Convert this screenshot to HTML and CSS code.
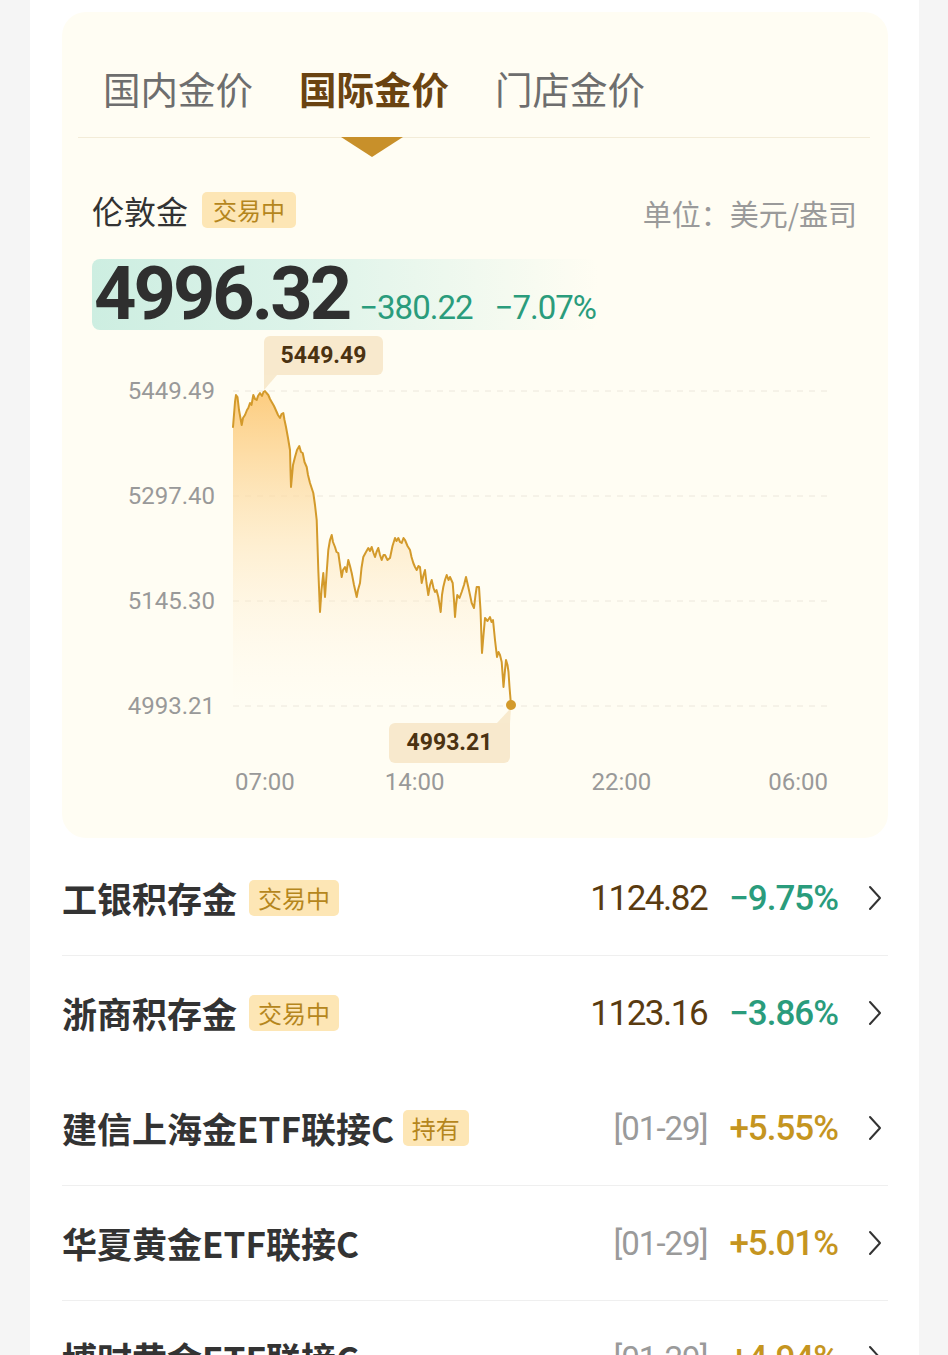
FILE: index.html
```html
<!DOCTYPE html>
<html lang="zh-CN">
<head>
<meta charset="utf-8">
<title>国际金价</title>
<link rel="stylesheet" href="styles.css">
</head>
<body>
<div class="page">
  <section class="gold-card">
    <nav class="tabs">
      <span class="tab">国内金价</span>
      <span class="tab active">国际金价</span>
      <span class="tab">门店金价</span>
    </nav>

    <div class="quote-head">
      <div class="quote-name">伦敦金<span class="badge badge-lg">交易中</span></div>
      <div class="unit">单位：美元/盎司</div>
    </div>

    <div class="price-box">
      <span class="price">4996.32</span>
      <span class="chg">−380.22</span>
      <span class="chg chg-pct">−7.07%</span>
    </div>

    <div class="chart">
      <div class="y-axis">
        <span>5449.49</span>
        <span>5297.40</span>
        <span>5145.30</span>
        <span>4993.21</span>
      </div>
      <div class="plot">
        <svg class="plot-svg" width="597" height="343" viewBox="233 377 597 343">
          <defs>
            <linearGradient id="fillGrad" gradientUnits="userSpaceOnUse" x1="0" y1="391" x2="0" y2="706">
              <stop offset="0" stop-color="#fcc772" stop-opacity="0.9"/>
              <stop offset="0.45" stop-color="#fde2b2" stop-opacity="0.6"/>
              <stop offset="1" stop-color="#fff6e6" stop-opacity="0"/>
            </linearGradient>
          </defs>
          <g class="grid">
            <line x1="233" y1="391" x2="831" y2="391"/>
            <line x1="233" y1="496" x2="831" y2="496"/>
            <line x1="233" y1="601" x2="831" y2="601"/>
            <line x1="233" y1="706" x2="831" y2="706"/>
          </g>
          <path class="area" d="M233 427 L235 402 L236 395 L237.5 397 L239 410 L241.7 425 L243 418 L245 415 L247 410 L248.3 408 L250 403 L251.5 405 L253.3 395 L255 399 L256.7 400 L258 396 L260 393 L262 396 L263.5 392 L265 391 L266.5 393 L268.3 395 L270 399 L271.7 402 L274 406 L276.7 412 L278 415 L280 418 L281.5 414 L283.3 413 L284.5 420 L286 427 L288 438 L290 450 L290.5 470 L291 487 L293 465 L295 457 L297 450 L299.3 446 L301 452 L302.7 453 L304.5 462 L306.7 467 L308 475 L310 483 L313.3 493 L315 505 L316.7 520 L317.5 545 L318.3 570 L320 612 L321.5 590 L323.3 573 L325 597 L326.5 575 L328.3 550 L330 540 L331.7 535 L333 542 L335 547 L336.5 552 L338.3 553 L340 565 L341.7 577 L343 570 L345 567 L346.5 572 L348.3 560 L350 566 L351.7 573 L354 585 L356.7 597 L358 590 L360 583 L361.5 568 L363.3 557 L366 552 L368.3 548 L370 551 L371.7 547 L373.5 553 L375 557 L376.5 552 L378.3 548 L380 555 L381.7 560 L383.5 555 L385 555 L387.5 560 L390 558 L392.5 546 L395 538 L396.5 541 L398.3 538 L400 542 L401.7 543 L403.5 538 L405 540 L407.5 546 L410 550 L411.5 557 L413.3 563 L415 567 L416.7 570 L418.5 566 L420 567 L421.7 583 L423.5 575 L425 570 L426.5 583 L428.3 595 L430 585 L431.7 580 L433.5 588 L435 592 L436.5 590 L438.3 597 L440.7 612 L442 595 L443.3 587 L445 580 L446.7 575 L448.5 580 L450 577 L452.7 583 L454 600 L455 617 L456 605 L457.3 595 L459.5 598 L461.7 592 L464 585 L466 577 L468.3 587 L470 595 L471.7 603 L474 608 L475.5 595 L476.7 587 L479 587 L480.5 610 L482 653 L483.5 635 L485 618 L487.5 621 L490 617 L491.5 622 L493 620 L495 640 L497 657 L498.5 652 L500 655 L501.7 662 L503.5 687 L505 670 L506 660 L507.5 665 L508.5 672 L509.5 687 L511 705 L511 706 L233 706 Z"/>
          <path class="line" d="M233 427 L235 402 L236 395 L237.5 397 L239 410 L241.7 425 L243 418 L245 415 L247 410 L248.3 408 L250 403 L251.5 405 L253.3 395 L255 399 L256.7 400 L258 396 L260 393 L262 396 L263.5 392 L265 391 L266.5 393 L268.3 395 L270 399 L271.7 402 L274 406 L276.7 412 L278 415 L280 418 L281.5 414 L283.3 413 L284.5 420 L286 427 L288 438 L290 450 L290.5 470 L291 487 L293 465 L295 457 L297 450 L299.3 446 L301 452 L302.7 453 L304.5 462 L306.7 467 L308 475 L310 483 L313.3 493 L315 505 L316.7 520 L317.5 545 L318.3 570 L320 612 L321.5 590 L323.3 573 L325 597 L326.5 575 L328.3 550 L330 540 L331.7 535 L333 542 L335 547 L336.5 552 L338.3 553 L340 565 L341.7 577 L343 570 L345 567 L346.5 572 L348.3 560 L350 566 L351.7 573 L354 585 L356.7 597 L358 590 L360 583 L361.5 568 L363.3 557 L366 552 L368.3 548 L370 551 L371.7 547 L373.5 553 L375 557 L376.5 552 L378.3 548 L380 555 L381.7 560 L383.5 555 L385 555 L387.5 560 L390 558 L392.5 546 L395 538 L396.5 541 L398.3 538 L400 542 L401.7 543 L403.5 538 L405 540 L407.5 546 L410 550 L411.5 557 L413.3 563 L415 567 L416.7 570 L418.5 566 L420 567 L421.7 583 L423.5 575 L425 570 L426.5 583 L428.3 595 L430 585 L431.7 580 L433.5 588 L435 592 L436.5 590 L438.3 597 L440.7 612 L442 595 L443.3 587 L445 580 L446.7 575 L448.5 580 L450 577 L452.7 583 L454 600 L455 617 L456 605 L457.3 595 L459.5 598 L461.7 592 L464 585 L466 577 L468.3 587 L470 595 L471.7 603 L474 608 L475.5 595 L476.7 587 L479 587 L480.5 610 L482 653 L483.5 635 L485 618 L487.5 621 L490 617 L491.5 622 L493 620 L495 640 L497 657 L498.5 652 L500 655 L501.7 662 L503.5 687 L505 670 L506 660 L507.5 665 L508.5 672 L509.5 687 L511 705"/>
          <polygon class="tail" points="264,375 264,390 277,375"/>
          <polygon class="tail" points="510,723 511,708 497,723"/>
          <circle class="dot" cx="511" cy="705" r="5"/>
        </svg>
        <div class="tip tip-high">5449.49</div>
        <div class="tip tip-low">4993.21</div>
      </div>
      <div class="x-axis">
        <span class="t t1">07:00</span>
        <span class="t t2">14:00</span>
        <span class="t t3">22:00</span>
        <span class="t t4">06:00</span>
      </div>
    </div>
  </section>

  <ul class="list">
    <li class="row">
      <div class="name">工银积存金<span class="badge">交易中</span></div>
      <div class="vals"><span class="num">1124.82</span><span class="pct down">−9.75%</span></div>
      <svg class="chev" width="14" height="26" viewBox="0 0 14 26"><polyline points="2,2 12,13 2,24"/></svg>
    </li>
    <li class="row plain">
      <div class="name">浙商积存金<span class="badge">交易中</span></div>
      <div class="vals"><span class="num">1123.16</span><span class="pct down">−3.86%</span></div>
      <svg class="chev" width="14" height="26" viewBox="0 0 14 26"><polyline points="2,2 12,13 2,24"/></svg>
    </li>
    <li class="row">
      <div class="name">建信上海金ETF联接C<span class="badge badge-sm">持有</span></div>
      <div class="vals"><span class="date">[01-29]</span><span class="pct up">+5.55%</span></div>
      <svg class="chev" width="14" height="26" viewBox="0 0 14 26"><polyline points="2,2 12,13 2,24"/></svg>
    </li>
    <li class="row">
      <div class="name">华夏黄金ETF联接C</div>
      <div class="vals"><span class="date">[01-29]</span><span class="pct up">+5.01%</span></div>
      <svg class="chev" width="14" height="26" viewBox="0 0 14 26"><polyline points="2,2 12,13 2,24"/></svg>
    </li>
    <li class="row">
      <div class="name">博时黄金ETF联接C</div>
      <div class="vals"><span class="date">[01-29]</span><span class="pct up">+4.94%</span></div>
      <svg class="chev" width="14" height="26" viewBox="0 0 14 26"><polyline points="2,2 12,13 2,24"/></svg>
    </li>
  </ul>
</div>
</body>
</html>
```

FILE: styles.css
```css
* {
  box-sizing: border-box;
  margin: 0;
  padding: 0;
}

html,
body {
  height: 100%;
}

body {
  background: #f5f5f5;
  font-family: "Noto Sans CJK SC", "Noto Sans", sans-serif;
  overflow: hidden;
}

.page {
  width: 889px;
  margin-left: 30px;
  min-height: 1355px;
  background: #ffffff;
  padding-top: 12px;
}

/* ---------- gold card ---------- */
.gold-card {
  margin: 0 31px 0 32px;
  background: #fffdf3;
  border-radius: 24px;
  padding: 54px 0 42px;
}

.tabs {
  display: flex;
  gap: 46px;
  margin: 0 18px 0 16px;
  padding: 0 0 27px 25px;
  border-bottom: 1px solid #f3ecd8;
}

.tab {
  position: relative;
  font-size: 37.5px;
  line-height: 44px;
  color: #6e6e6e;
}

.tab.active {
  color: #6a4311;
  font-weight: 700;
}

.tab.active::after {
  content: "";
  position: absolute;
  left: 50%;
  margin-left: -33px;
  top: 71px;
  border-left: 31px solid transparent;
  border-right: 31px solid transparent;
  border-top: 20px solid #c8902a;
}

.quote-head {
  display: flex;
  justify-content: space-between;
  align-items: center;
  height: 36px;
  margin: 54px 31px 0 30px;
}

.quote-name {
  display: flex;
  align-items: center;
  font-size: 32px;
  line-height: 36px;
  color: #333333;
}

.badge {
  display: inline-block;
  margin-left: 12px;
  padding: 0 9px;
  height: 36px;
  font-size: 24px;
  line-height: 36px;
  font-weight: 400;
  color: #b5861d;
  background: #fde6b5;
  border-radius: 5px;
}

.badge-lg {
  margin-left: 14px;
  padding: 0 11px;
}

.badge-sm {
  margin-left: 9px;
}

.unit {
  font-size: 29px;
  line-height: 36px;
  color: #9a9a9a;
  margin-top: 6px;
}

.price-box {
  display: flex;
  align-items: baseline;
  width: 506px;
  height: 71px;
  margin: 31px 0 0 30px;
  padding-left: 2px;
  border-radius: 8px;
  background: linear-gradient(90deg, #cdeee1 0%, #dcf3e9 40%, rgba(255, 253, 243, 0) 100%);
}

.price {
  font-family: Roboto, "Liberation Sans", sans-serif;
  font-weight: 700;
  font-size: 74px;
  line-height: 69px;
  letter-spacing: -3px;
  color: #2f2f2f;
}

.chg {
  font-family: Roboto, "Liberation Sans", sans-serif;
  font-size: 33px;
  letter-spacing: -1px;
  color: #2a9c7c;
  margin-left: 10px;
}

.chg-pct {
  margin-left: 22px;
}

/* ---------- chart ---------- */
.chart {
  display: grid;
  grid-template-columns: 123px 597px;
  column-gap: 18px;
  margin: 47px 0 0 30px;
}

.y-axis {
  height: 343px;
  display: flex;
  flex-direction: column;
  justify-content: space-between;
  align-items: flex-end;
  font-family: Roboto, "Liberation Sans", sans-serif;
  font-size: 24px;
  line-height: 28px;
  color: #999999;
}

.plot {
  position: relative;
  height: 343px;
}

.plot-svg {
  display: block;
  overflow: visible;
}

.grid line {
  stroke: #ece7dc;
  stroke-width: 1;
  stroke-dasharray: 6 6;
}

.area {
  fill: url(#fillGrad);
}

.line {
  fill: none;
  stroke: #d39a2b;
  stroke-width: 2;
  stroke-linejoin: round;
  stroke-linecap: round;
}

.tail {
  fill: #f6e5c4;
  opacity: 0.8;
}

.dot {
  fill: #d39a2b;
}

.tip {
  position: absolute;
  background: #f8e9cd;
  color: #4b3211;
  font-family: Roboto, "Liberation Sans", sans-serif;
  font-weight: 700;
  font-size: 23px;
  text-align: center;
  border-radius: 6px;
}

.tip-high {
  left: 31px;
  top: -41px;
  width: 119px;
  height: 39px;
  line-height: 39px;
  border-bottom-left-radius: 0;
}

.tip-low {
  left: 156px;
  top: 346px;
  width: 121px;
  height: 40px;
  line-height: 40px;
  border-top-right-radius: 0;
}

.x-axis {
  grid-column: 2;
  display: flex;
  margin-top: 48px;
  font-family: Roboto, "Liberation Sans", sans-serif;
  font-size: 24px;
  line-height: 28px;
  color: #999999;
}

.t1 { margin-left: 2px; }
.t2 { margin-left: 90px; }
.t3 { margin-left: 147px; }
.t4 { margin-left: 117px; }

/* ---------- list ---------- */
.list {
  list-style: none;
  margin: 3px 31px 0 32px;
}

.row {
  display: flex;
  align-items: center;
  height: 115px;
  border-bottom: 1px solid #efefef;
}

.row.plain {
  border-bottom-color: transparent;
}

.name {
  display: flex;
  align-items: center;
  font-size: 35px;
  line-height: 40px;
  font-weight: 700;
  color: #333333;
}

.vals {
  margin-left: auto;
  display: flex;
  align-items: baseline;
  gap: 22px;
  font-family: Roboto, "Liberation Sans", sans-serif;
}

.num {
  font-size: 35px;
  letter-spacing: -1.5px;
  color: #5a3b10;
}

.pct {
  font-size: 35px;
  letter-spacing: -1px;
  font-weight: 500;
}

.down {
  color: #2a9c7c;
}

.up {
  color: #c5951f;
}

.date {
  font-size: 33px;
  letter-spacing: -1px;
  color: #9a9a9a;
}

.chev {
  margin-left: 30px;
  margin-right: 6px;
  flex: none;
}

.chev polyline {
  fill: none;
  stroke: #333333;
  stroke-width: 2;
  stroke-linecap: round;
  stroke-linejoin: round;
}
```
